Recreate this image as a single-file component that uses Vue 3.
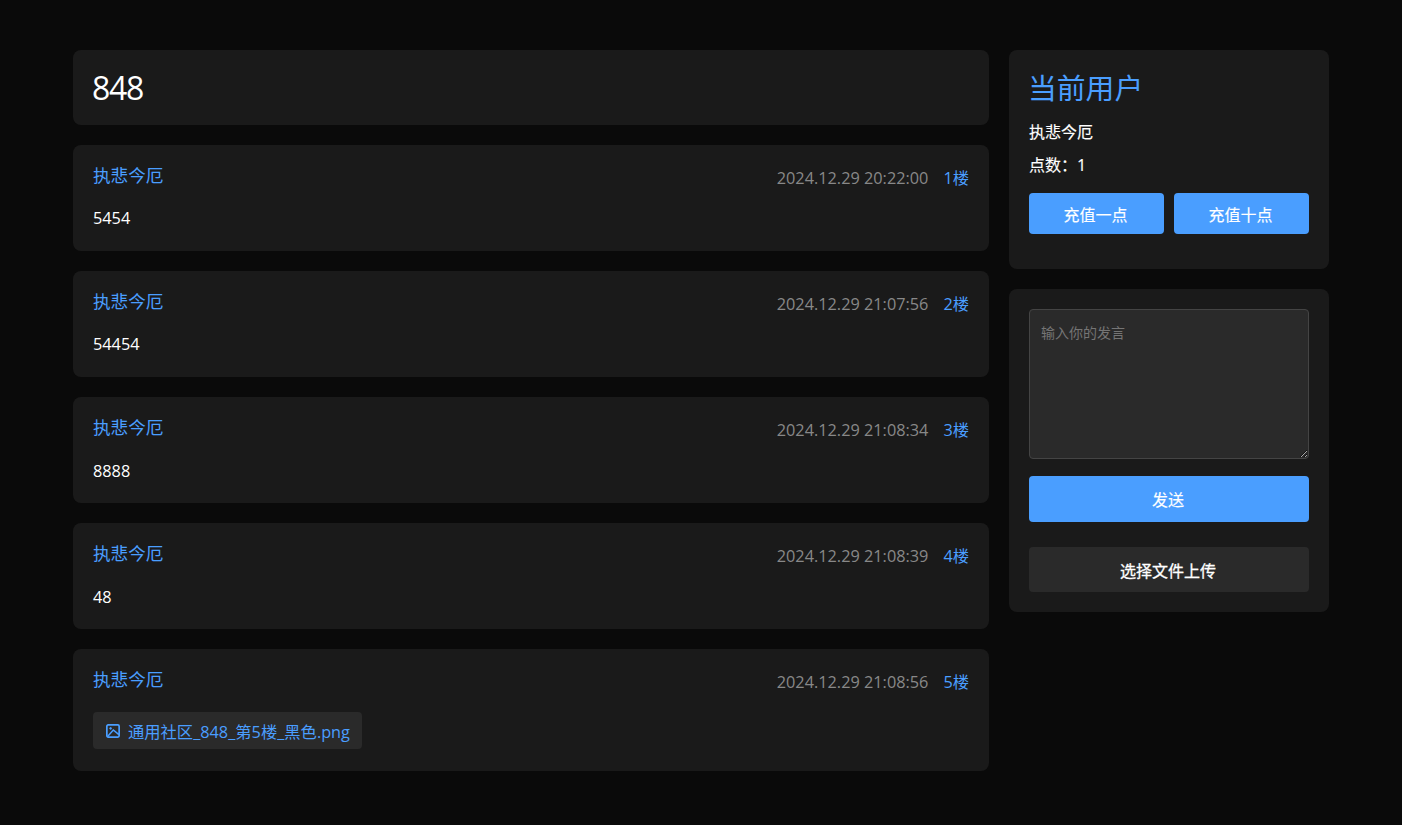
<script setup>
const posts = [
  { time: '2024.12.29 20:22:00', floor: 1, text: '5454' },
  { time: '2024.12.29 21:07:56', floor: 2, text: '54454' },
  { time: '2024.12.29 21:08:34', floor: 3, text: '8888' },
  { time: '2024.12.29 21:08:39', floor: 4, text: '48' },
  { time: '2024.12.29 21:08:56', floor: 5, file: '通用社区_848_第5楼_黑色.png' },
]
</script>

<template>
  <div class="page">
    <main class="main">
      <section class="card title-card"><h1>848</h1></section>
      <article v-for="p in posts" :key="p.floor" class="card post">
        <header class="post-head">
          <span class="author">执悲今厄</span>
          <span class="meta">
            <span class="time">{{ p.time }}</span>
            <span class="floor">{{ p.floor }}楼</span>
          </span>
        </header>
        <p v-if="p.text" class="content">{{ p.text }}</p>
        <a v-else class="file">
          <svg class="file-icon" viewBox="0 0 16 16" width="16" height="16" fill="none" stroke="currentColor" stroke-width="1.7">
            <rect x="1.85" y="1.85" width="12.3" height="12.3" rx="1.3" />
            <circle cx="5.6" cy="5.4" r="0.9" fill="currentColor" stroke-width="0.8" />
            <path d="M2.6 13.4 8.3 7l5.6 4.6" stroke-width="1.5" />
          </svg>
          <span>{{ p.file }}</span>
        </a>
      </article>
    </main>
    <aside class="side">
      <section class="card user">
        <h2>当前用户</h2>
        <p class="name">执悲今厄</p>
        <p class="points">点数：1</p>
        <div class="actions">
          <button class="btn primary small">充值一点</button>
          <button class="btn primary small">充值十点</button>
        </div>
      </section>
      <section class="card composer">
        <textarea placeholder="输入你的发言"></textarea>
        <button class="btn primary send">发送</button>
        <button class="btn upload">选择文件上传</button>
      </section>
    </aside>
  </div>
</template>

<style>
html, body { background: #0a0a0a; }
</style>

<style scoped>
* { box-sizing: border-box; }
.page {
  width: 1402px;
  height: 825px;
  overflow: hidden;
  padding: 50px 73px 0;
  display: flex;
  gap: 20px;
  background: #0a0a0a;
  color: #fff;
  font-family: "Open Sans", "Noto Sans CJK SC", sans-serif;
  font-size: 16.3px;
}
.main { width: 916px; display: flex; flex-direction: column; gap: 20.1px; }
.side { width: 320px; display: flex; flex-direction: column; gap: 20px; }
.card { background: #1a1a1a; border-radius: 8px; padding: 20px; }
.title-card { height: 74.9px; display: flex; align-items: center; }
h1 { margin: 0 0 0 -1px; font-size: 32px; font-weight: 400; line-height: 35px; letter-spacing: -1.3px; }
.post { height: 106px; }
.post:last-child { height: 122px; }
.post-head { display: flex; justify-content: space-between; align-items: flex-start; height: 41px; }
.author { color: #4a9eff; font-size: 17.6px; line-height: 20px; }
.meta { display: flex; gap: 15px; line-height: 27px; }
.time { color: #888; }
.floor { color: #4a9eff; }
.content { margin: 0.38px 0 0; line-height: 24px; }
.file {
  display: inline-flex;
  align-items: center;
  gap: 7px;
  height: 37px;
  padding: 0 12px;
  background: #2a2a2a;
  border-radius: 4px;
  color: #4a9eff;
  margin-top: 2px;
}
.file-icon { flex: none; }
h2 { margin: -1px 0 17px -1px; font-size: 28.8px; font-weight: 400; color: #4a9eff; line-height: 38px; }
.name, .points { margin: 0; font-size: 16px; line-height: 17px; -webkit-text-stroke: 0.15px #fff; }
.name { margin-bottom: 16px; }
.user { height: 219px; }
.actions { display: flex; gap: 10px; margin-top: 19px; }
.btn { border: 0; border-radius: 4px; color: #fff; font: inherit; font-size: 16px; display: block; padding: 0 2px 0 0; -webkit-text-stroke: 0.15px #fff; }
.primary { background: #4a9eff; }
.small { width: 135px; height: 41px; }
.composer { display: flex; flex-direction: column; height: 323px; }
textarea {
  width: 280px;
  height: 150px;
  background: #2a2a2a;
  border: 1px solid #444;
  border-radius: 4px;
  padding: 12px 11px;
  color: #fff;
  font: inherit;
  font-size: 14px;
  display: block;
  outline: none;
}
textarea::placeholder { color: #757575; }
.send { width: 280px; height: 46px; margin-top: 17px; }
.upload { width: 280px; height: 45px; margin-top: 25px; background: #2a2a2a; -webkit-text-stroke: 0.3px #fff; }
</style>
